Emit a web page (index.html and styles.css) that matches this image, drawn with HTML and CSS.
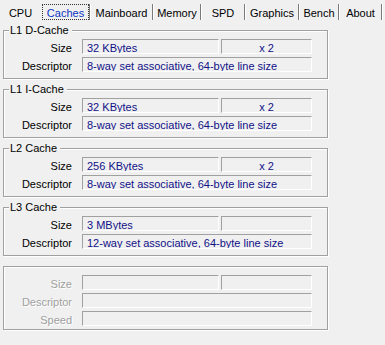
FILE: index.html
```html
<!DOCTYPE html>
<html>
<head>
<meta charset="utf-8">
<link rel="stylesheet" href="styles.css">
</head>
<body>
<div class="tabs">
  <div class="tab t-cpu">CPU</div>
  <div class="tab t-caches sel"><span class="focus">Caches</span></div>
  <div class="tab t-main">Mainboard</div>
  <div class="tab t-mem">Memory</div>
  <div class="tab t-spd">SPD</div>
  <div class="tab t-gfx">Graphics</div>
  <div class="tab t-bench">Bench</div>
  <div class="tab t-about">About</div>
</div>
<div class="panel">
  <div class="group">
    <span class="legend">L1 D-Cache</span>
    <div class="row"><span class="lbl">Size</span><span class="field f-size">32 KBytes</span><span class="field f-assoc">x 2</span></div>
    <div class="row"><span class="lbl">Descriptor</span><span class="field f-wide">8-way set associative, 64-byte line size</span></div>
  </div>
  <div class="group">
    <span class="legend">L1 I-Cache</span>
    <div class="row"><span class="lbl">Size</span><span class="field f-size">32 KBytes</span><span class="field f-assoc">x 2</span></div>
    <div class="row"><span class="lbl">Descriptor</span><span class="field f-wide">8-way set associative, 64-byte line size</span></div>
  </div>
  <div class="group">
    <span class="legend">L2 Cache</span>
    <div class="row"><span class="lbl">Size</span><span class="field f-size">256 KBytes</span><span class="field f-assoc">x 2</span></div>
    <div class="row"><span class="lbl">Descriptor</span><span class="field f-wide">8-way set associative, 64-byte line size</span></div>
  </div>
  <div class="group">
    <span class="legend">L3 Cache</span>
    <div class="row"><span class="lbl">Size</span><span class="field f-size">3 MBytes</span><span class="field f-assoc"></span></div>
    <div class="row"><span class="lbl">Descriptor</span><span class="field f-wide">12-way set associative, 64-byte line size</span></div>
  </div>
  <div class="group empty">
    <div class="row"><span class="lbl dis">Size</span><span class="field f-size"></span><span class="field f-assoc"></span></div>
    <div class="row"><span class="lbl dis">Descriptor</span><span class="field f-wide"></span></div>
    <div class="row"><span class="lbl dis">Speed</span><span class="field f-wide"></span></div>
  </div>
</div>
</body>
</html>
```

FILE: styles.css
```css
html, body {
  margin: 0;
  padding: 0;
  background: #f0f0f0;
}
body {
  width: 385px;
  height: 345px;
  overflow: hidden;
  font-family: "Liberation Sans", Arial, sans-serif;
  font-size: 11px;
  color: #000;
}
.tabs {
  display: flex;
  height: 24px;
  padding-top: 4px;
  box-sizing: border-box;
}
.tab {
  height: 16px;
  line-height: 19px;
  text-align: center;
  box-sizing: border-box;
  border-right: 1px solid #7a7a7a;
  box-shadow: 1px 0 0 #ffffff;
  white-space: nowrap;
}
.t-cpu { width: 41px; border-right: none; box-shadow: none; }
.t-caches { width: 49px; color: #0b34c4; }
.t-main { width: 62px; margin-left: 1px; }
.t-mem { width: 47px; margin-left: 1px; }
.t-spd { width: 43px; margin-left: 1px; }
.t-gfx { width: 53px; margin-left: 1px; }
.t-bench { width: 39px; margin-left: 1px; }
.t-about { width: 42px; margin-left: 1px; }
.focus {
  display: block;
  margin-left: 1px;
  width: 47px;
  height: 16px;
  line-height: 17px;
  box-sizing: border-box;
  border: 1px dotted #333;
}
.panel {
  padding: 6px 0 0 3px;
  display: flex;
  flex-direction: column;
  gap: 10px;
}
.group {
  position: relative;
  width: 325px;
  box-sizing: border-box;
  border: 1px solid #a0a0a0;
  box-shadow: 1px 1px 0 #ffffff, inset 1px 1px 0 #ffffff;
  padding: 8px 0 6px 0;
  display: flex;
  flex-direction: column;
  gap: 3px;
}
.group.empty {
  padding: 8px 0 3px 0;
}
.legend {
  position: absolute;
  left: 5px;
  top: -7px;
  line-height: 13px;
  padding: 0 3px 0 1px;
  background: #f0f0f0;
  color: #000;
}
.row {
  display: flex;
  height: 15px;
}
.lbl {
  flex: 0 0 68px;
  text-align: right;
  box-sizing: border-box;
  padding-top: 3px;
  line-height: 13px;
  height: 15px;
  white-space: nowrap;
}
.lbl.dis {
  color: #a0a0a0;
  text-shadow: 1px 1px 0 #ffffff;
}
.field {
  display: block;
  height: 15px;
  box-sizing: border-box;
  border-top: 1px solid #a0a0a0;
  border-left: 1px solid #a0a0a0;
  border-right: 1px solid #ffffff;
  border-bottom: 1px solid #ffffff;
  padding: 2px 0 0 4px;
  line-height: 13px;
  color: #101088;
  white-space: nowrap;
  overflow: hidden;
}
.f-size { width: 137px; margin-left: 10px; }
.f-assoc { width: 91px; margin-left: 2px; text-align: center; padding-left: 0; }
.f-wide { width: 230px; margin-left: 10px; }
```
